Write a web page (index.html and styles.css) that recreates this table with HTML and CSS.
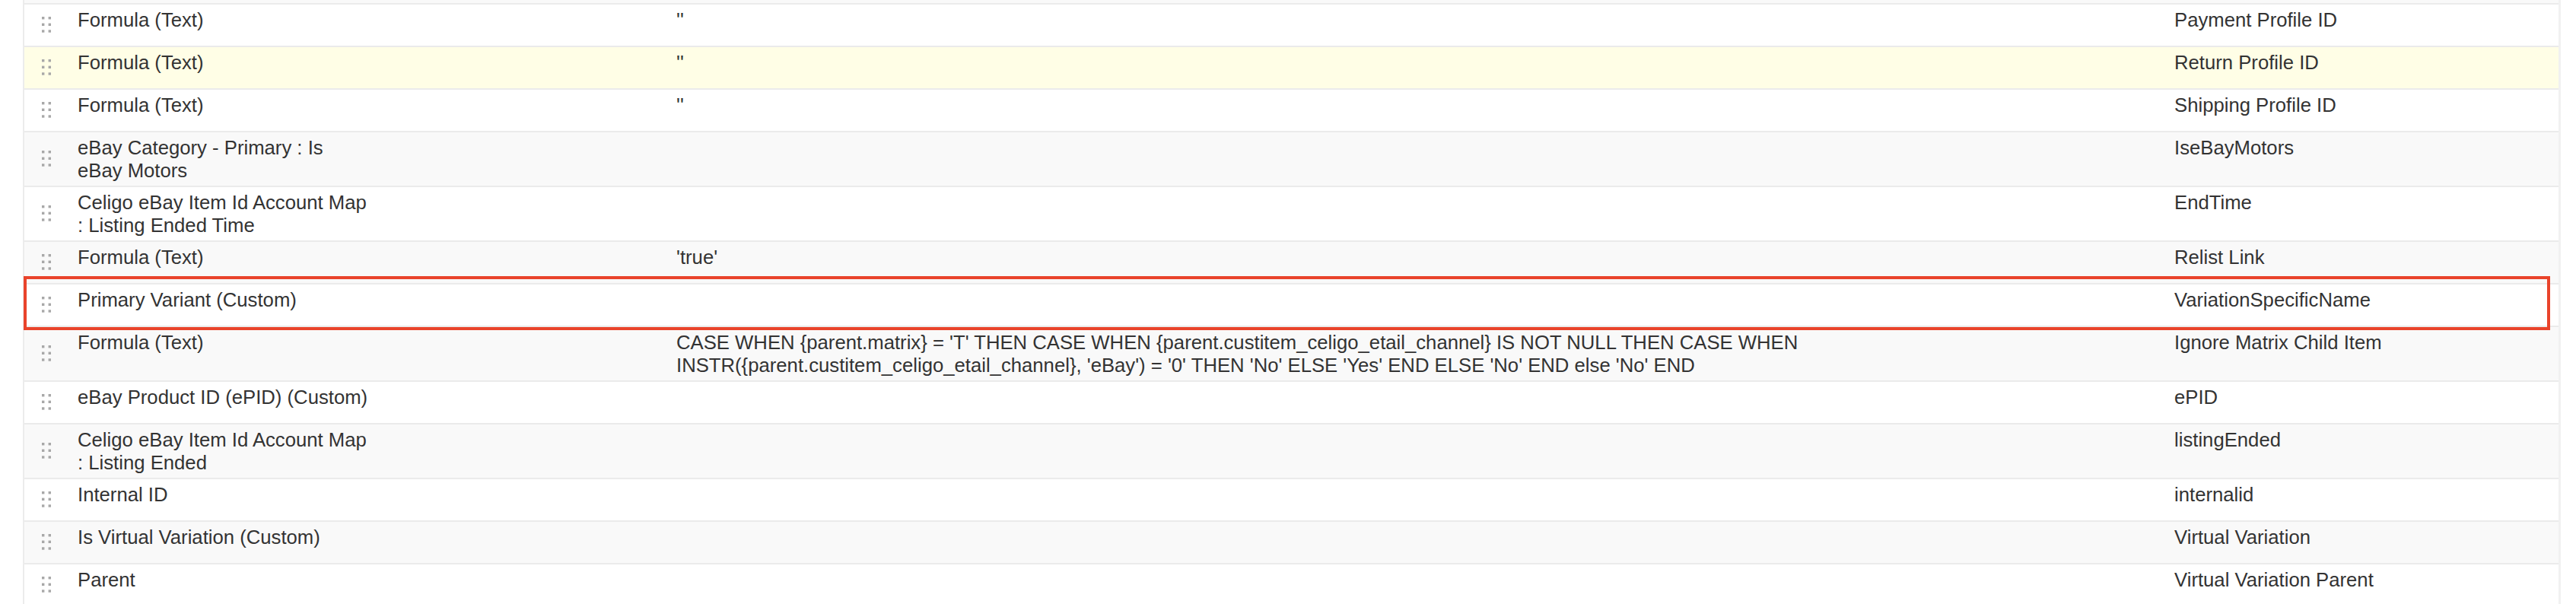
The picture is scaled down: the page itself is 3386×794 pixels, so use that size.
FILE: index.html
```html
<!DOCTYPE html>
<html lang="en">
<head>
<meta charset="utf-8">
<title>Field mappings</title>
<link rel="stylesheet" href="styles.css">
</head>
<body>
<div class="page">
  <div class="table">
    <div class="row-stub"></div>

    <div class="row">
      <div class="cell handle"><svg viewBox="0 0 12 21" width="12" height="21"><g fill="#a8a8a8"><rect x="0" y="0" width="3.4" height="3.4"/><rect x="8.6" y="0" width="3.4" height="3.4"/><rect x="0" y="8.6" width="3.4" height="3.4"/><rect x="8.6" y="8.6" width="3.4" height="3.4"/><rect x="0" y="17.3" width="3.4" height="3.4"/><rect x="8.6" y="17.3" width="3.4" height="3.4"/></g></svg></div>
      <div class="cell src">Formula (Text)</div>
      <div class="cell expr">''</div>
      <div class="cell dest">Payment Profile ID</div>
    </div>

    <div class="row highlight">
      <div class="cell handle"><svg viewBox="0 0 12 21" width="12" height="21"><g fill="#a8a8a8"><rect x="0" y="0" width="3.4" height="3.4"/><rect x="8.6" y="0" width="3.4" height="3.4"/><rect x="0" y="8.6" width="3.4" height="3.4"/><rect x="8.6" y="8.6" width="3.4" height="3.4"/><rect x="0" y="17.3" width="3.4" height="3.4"/><rect x="8.6" y="17.3" width="3.4" height="3.4"/></g></svg></div>
      <div class="cell src">Formula (Text)</div>
      <div class="cell expr">''</div>
      <div class="cell dest">Return Profile ID</div>
    </div>

    <div class="row">
      <div class="cell handle"><svg viewBox="0 0 12 21" width="12" height="21"><g fill="#a8a8a8"><rect x="0" y="0" width="3.4" height="3.4"/><rect x="8.6" y="0" width="3.4" height="3.4"/><rect x="0" y="8.6" width="3.4" height="3.4"/><rect x="8.6" y="8.6" width="3.4" height="3.4"/><rect x="0" y="17.3" width="3.4" height="3.4"/><rect x="8.6" y="17.3" width="3.4" height="3.4"/></g></svg></div>
      <div class="cell src">Formula (Text)</div>
      <div class="cell expr">''</div>
      <div class="cell dest">Shipping Profile ID</div>
    </div>

    <div class="row alt">
      <div class="cell handle"><svg viewBox="0 0 12 21" width="12" height="21"><g fill="#a8a8a8"><rect x="0" y="0" width="3.4" height="3.4"/><rect x="8.6" y="0" width="3.4" height="3.4"/><rect x="0" y="8.6" width="3.4" height="3.4"/><rect x="8.6" y="8.6" width="3.4" height="3.4"/><rect x="0" y="17.3" width="3.4" height="3.4"/><rect x="8.6" y="17.3" width="3.4" height="3.4"/></g></svg></div>
      <div class="cell src">eBay Category - Primary : Is eBay Motors</div>
      <div class="cell expr"></div>
      <div class="cell dest">IseBayMotors</div>
    </div>

    <div class="row">
      <div class="cell handle"><svg viewBox="0 0 12 21" width="12" height="21"><g fill="#a8a8a8"><rect x="0" y="0" width="3.4" height="3.4"/><rect x="8.6" y="0" width="3.4" height="3.4"/><rect x="0" y="8.6" width="3.4" height="3.4"/><rect x="8.6" y="8.6" width="3.4" height="3.4"/><rect x="0" y="17.3" width="3.4" height="3.4"/><rect x="8.6" y="17.3" width="3.4" height="3.4"/></g></svg></div>
      <div class="cell src">Celigo eBay Item Id Account Map : Listing Ended Time</div>
      <div class="cell expr"></div>
      <div class="cell dest">EndTime</div>
    </div>

    <div class="row alt">
      <div class="cell handle"><svg viewBox="0 0 12 21" width="12" height="21"><g fill="#a8a8a8"><rect x="0" y="0" width="3.4" height="3.4"/><rect x="8.6" y="0" width="3.4" height="3.4"/><rect x="0" y="8.6" width="3.4" height="3.4"/><rect x="8.6" y="8.6" width="3.4" height="3.4"/><rect x="0" y="17.3" width="3.4" height="3.4"/><rect x="8.6" y="17.3" width="3.4" height="3.4"/></g></svg></div>
      <div class="cell src">Formula (Text)</div>
      <div class="cell expr">'true'</div>
      <div class="cell dest">Relist Link</div>
    </div>

    <div class="row">
      <div class="cell handle"><svg viewBox="0 0 12 21" width="12" height="21"><g fill="#a8a8a8"><rect x="0" y="0" width="3.4" height="3.4"/><rect x="8.6" y="0" width="3.4" height="3.4"/><rect x="0" y="8.6" width="3.4" height="3.4"/><rect x="8.6" y="8.6" width="3.4" height="3.4"/><rect x="0" y="17.3" width="3.4" height="3.4"/><rect x="8.6" y="17.3" width="3.4" height="3.4"/></g></svg></div>
      <div class="cell src">Primary Variant (Custom)</div>
      <div class="cell expr"></div>
      <div class="cell dest">VariationSpecificName</div>
    </div>

    <div class="row alt">
      <div class="cell handle"><svg viewBox="0 0 12 21" width="12" height="21"><g fill="#a8a8a8"><rect x="0" y="0" width="3.4" height="3.4"/><rect x="8.6" y="0" width="3.4" height="3.4"/><rect x="0" y="8.6" width="3.4" height="3.4"/><rect x="8.6" y="8.6" width="3.4" height="3.4"/><rect x="0" y="17.3" width="3.4" height="3.4"/><rect x="8.6" y="17.3" width="3.4" height="3.4"/></g></svg></div>
      <div class="cell src">Formula (Text)</div>
      <div class="cell expr">CASE WHEN {parent.matrix} = 'T' THEN CASE WHEN {parent.custitem_celigo_etail_channel} IS NOT NULL THEN CASE WHEN INSTR({parent.custitem_celigo_etail_channel}, 'eBay') = '0' THEN 'No' ELSE 'Yes' END ELSE 'No' END else 'No' END</div>
      <div class="cell dest">Ignore Matrix Child Item</div>
    </div>

    <div class="row">
      <div class="cell handle"><svg viewBox="0 0 12 21" width="12" height="21"><g fill="#a8a8a8"><rect x="0" y="0" width="3.4" height="3.4"/><rect x="8.6" y="0" width="3.4" height="3.4"/><rect x="0" y="8.6" width="3.4" height="3.4"/><rect x="8.6" y="8.6" width="3.4" height="3.4"/><rect x="0" y="17.3" width="3.4" height="3.4"/><rect x="8.6" y="17.3" width="3.4" height="3.4"/></g></svg></div>
      <div class="cell src">eBay Product ID (ePID) (Custom)</div>
      <div class="cell expr"></div>
      <div class="cell dest">ePID</div>
    </div>

    <div class="row alt">
      <div class="cell handle"><svg viewBox="0 0 12 21" width="12" height="21"><g fill="#a8a8a8"><rect x="0" y="0" width="3.4" height="3.4"/><rect x="8.6" y="0" width="3.4" height="3.4"/><rect x="0" y="8.6" width="3.4" height="3.4"/><rect x="8.6" y="8.6" width="3.4" height="3.4"/><rect x="0" y="17.3" width="3.4" height="3.4"/><rect x="8.6" y="17.3" width="3.4" height="3.4"/></g></svg></div>
      <div class="cell src">Celigo eBay Item Id Account Map : Listing Ended</div>
      <div class="cell expr"></div>
      <div class="cell dest">listingEnded</div>
    </div>

    <div class="row">
      <div class="cell handle"><svg viewBox="0 0 12 21" width="12" height="21"><g fill="#a8a8a8"><rect x="0" y="0" width="3.4" height="3.4"/><rect x="8.6" y="0" width="3.4" height="3.4"/><rect x="0" y="8.6" width="3.4" height="3.4"/><rect x="8.6" y="8.6" width="3.4" height="3.4"/><rect x="0" y="17.3" width="3.4" height="3.4"/><rect x="8.6" y="17.3" width="3.4" height="3.4"/></g></svg></div>
      <div class="cell src">Internal ID</div>
      <div class="cell expr"></div>
      <div class="cell dest">internalid</div>
    </div>

    <div class="row alt">
      <div class="cell handle"><svg viewBox="0 0 12 21" width="12" height="21"><g fill="#a8a8a8"><rect x="0" y="0" width="3.4" height="3.4"/><rect x="8.6" y="0" width="3.4" height="3.4"/><rect x="0" y="8.6" width="3.4" height="3.4"/><rect x="8.6" y="8.6" width="3.4" height="3.4"/><rect x="0" y="17.3" width="3.4" height="3.4"/><rect x="8.6" y="17.3" width="3.4" height="3.4"/></g></svg></div>
      <div class="cell src">Is Virtual Variation (Custom)</div>
      <div class="cell expr"></div>
      <div class="cell dest">Virtual Variation</div>
    </div>

    <div class="row">
      <div class="cell handle"><svg viewBox="0 0 12 21" width="12" height="21"><g fill="#a8a8a8"><rect x="0" y="0" width="3.4" height="3.4"/><rect x="8.6" y="0" width="3.4" height="3.4"/><rect x="0" y="8.6" width="3.4" height="3.4"/><rect x="8.6" y="8.6" width="3.4" height="3.4"/><rect x="0" y="17.3" width="3.4" height="3.4"/><rect x="8.6" y="17.3" width="3.4" height="3.4"/></g></svg></div>
      <div class="cell src">Parent</div>
      <div class="cell expr"></div>
      <div class="cell dest">Virtual Variation Parent</div>
    </div>
  </div>

  <div class="callout"></div>
</div>
</body>
</html>
```

FILE: styles.css
```css
html, body {
  margin: 0;
  padding: 0;
  background: #ffffff;
  overflow: hidden;
}

.page {
  position: relative;
  font-family: "Liberation Sans", Arial, Helvetica, sans-serif;
  font-size: 25.7px;
  line-height: 30px;
  color: #333333;
}

.table {
  margin-left: 30px;
  width: 3336px;
  box-sizing: border-box;
  border-left: 2px solid #ececec;
  border-right: 3px solid #f1f1f1;
}

.row-stub {
  height: 4px;
  background: #f9f9f9;
  border-bottom: 2px solid #ebebeb;
}

.row {
  display: grid;
  grid-template-columns: 70px 787px 1969px 1fr;
  min-height: 54px;
  background: #ffffff;
  border-bottom: 2px solid #ebebeb;
}

.row.alt {
  background: #f9f9f9;
}

.row.highlight {
  background: #fffee6;
}

.cell {
  padding: 5px 0;
}

.handle {
  align-self: center;
  padding: 0 0 2px 23px;
  display: flex;
}

.handle svg {
  display: block;
}

.src {
  padding-right: 400px;
}

.expr {
  padding-right: 269px;
}

.callout {
  position: absolute;
  left: 31px;
  top: 363px;
  width: 3321px;
  height: 71px;
  box-sizing: border-box;
  border: 4px solid #e9432b;
  pointer-events: none;
}
```
